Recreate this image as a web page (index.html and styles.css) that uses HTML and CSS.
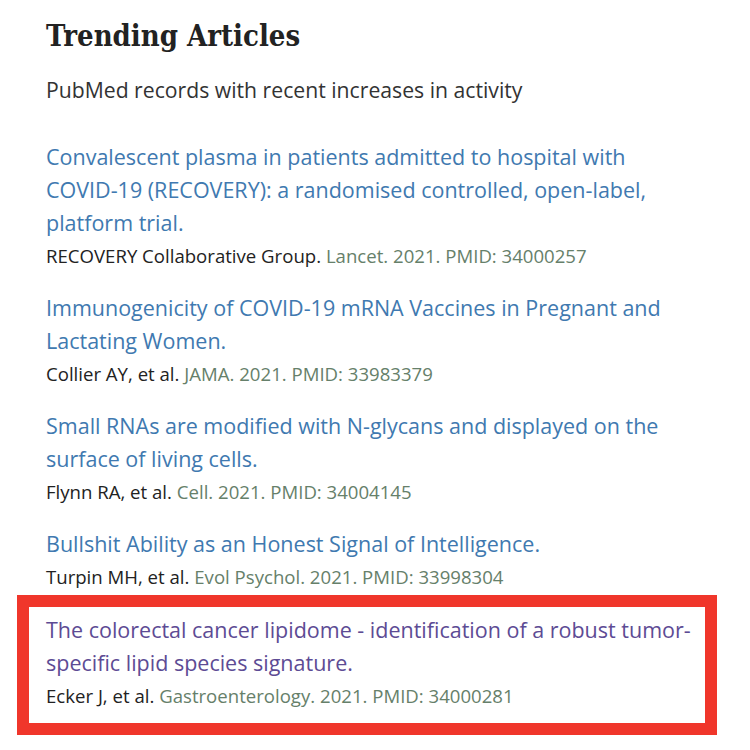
FILE: index.html
```html
<!DOCTYPE html>
<html>
<head>
<meta charset="utf-8">
<link rel="stylesheet" href="styles.css">
</head>
<body>
<main class="trending">
  <h2 class="heading">Trending Articles</h2>
  <p class="subtitle">PubMed records with recent increases in activity</p>
  <ul class="articles">
    <li class="article">
      <a class="title" href="#">Convalescent plasma in patients admitted to hospital with<br>COVID-19 (RECOVERY): a randomised controlled, open-label, platform trial.</a>
      <div class="meta"><span class="authors">RECOVERY Collaborative Group.</span> <span class="cite">Lancet. 2021. PMID: 34000257</span></div>
    </li>
    <li class="article">
      <a class="title" href="#">Immunogenicity of COVID-19 mRNA Vaccines in Pregnant and Lactating Women.</a>
      <div class="meta"><span class="authors">Collier AY, et al.</span> <span class="cite">JAMA. 2021. PMID: 33983379</span></div>
    </li>
    <li class="article">
      <a class="title" href="#">Small RNAs are modified with N-glycans and displayed on the surface of living cells.</a>
      <div class="meta"><span class="authors">Flynn RA, et al.</span> <span class="cite">Cell. 2021. PMID: 34004145</span></div>
    </li>
    <li class="article">
      <a class="title" href="#">Bullshit Ability as an Honest Signal of Intelligence.</a>
      <div class="meta"><span class="authors">Turpin MH, et al.</span> <span class="cite">Evol Psychol. 2021. PMID: 33998304</span></div>
    </li>
    <li class="article highlighted">
      <a class="title visited" href="#">The colorectal cancer lipidome - identification of a robust tumor-specific lipid species signature.</a>
      <div class="meta"><span class="authors">Ecker J, et al.</span> <span class="cite">Gastroenterology. 2021. PMID: 34000281</span></div>
    </li>
  </ul>
</main>
</body>
</html>
```

FILE: styles.css
```css
html, body {
  margin: 0;
  padding: 0;
  background: #ffffff;
}

.trending {
  width: 660px;
  padding: 14px 0 0 46px;
  font-family: "Open Sans", "Noto Sans", sans-serif;
}

.heading {
  margin: 0;
  font-family: "DejaVu Serif Condensed", "DejaVu Serif", serif;
  font-stretch: condensed;
  font-weight: bold;
  font-size: 29px;
  line-height: 44px;
  color: #222222;
}

.subtitle {
  margin: 17px 0 0 0;
  font-size: 21.2px;
  line-height: 30px;
  color: #333333;
}

.articles {
  list-style: none;
  margin: 35px 0 0 0;
  padding: 0;
}

.article + .article {
  margin-top: 19px;
}

.title {
  display: block;
  font-size: 21.5px;
  line-height: 33px;
  color: #4079b0;
  text-decoration: none;
}

.title.visited {
  color: #5d4b94;
}

.meta {
  font-size: 18.6px;
  line-height: 33px;
  color: #222222;
}

.cite {
  color: #66806a;
}

.article.highlighted {
  margin: 2px 0 0 -29px;
  border: 12px solid #f0362b;
  padding: 6px 0 11px 17px;
  width: 659px;
}
```
